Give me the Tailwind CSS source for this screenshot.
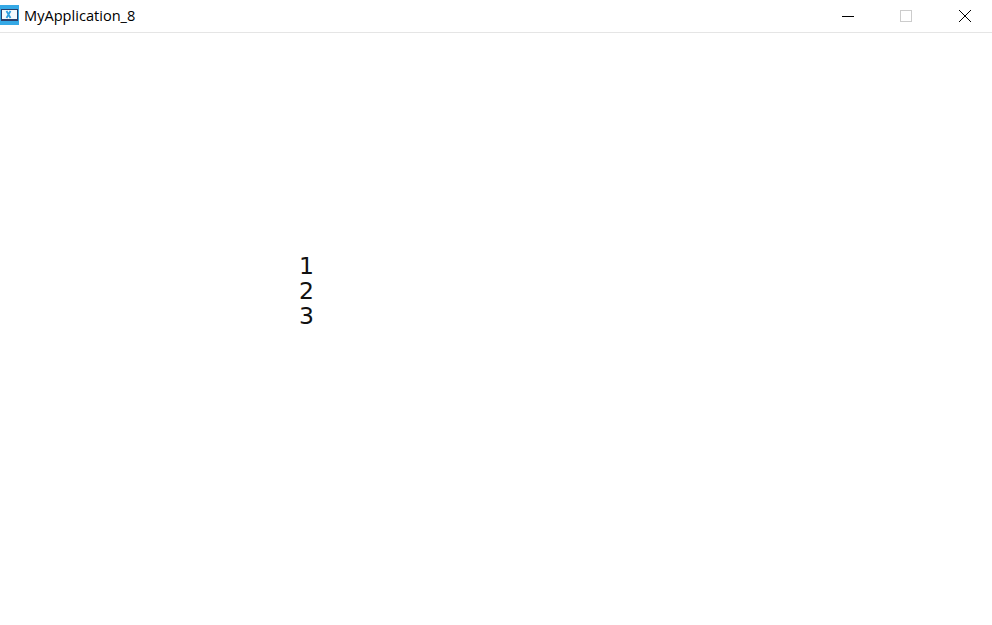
<!DOCTYPE html>
<html lang="en">
<head>
    <meta charset="utf-8"/>
    <title>MyApplication_8</title>
    <script src="https://cdn.jsdelivr.net/npm/@tailwindcss/browser@4"></script>
</head>
<body class="bg-white h-[625px] w-[992px] overflow-hidden">
<div class="flex h-[33px] items-center border-b border-[#e5e5e5] font-['Open_Sans',sans-serif] text-black">
    <svg class="mt-[-2px] h-[20px] w-[19px] shrink-0" viewBox="0 0 19 20">
        <rect width="19" height="20" fill="#35a9e6"/>
        <rect x="1" y="4" width="17" height="12" fill="#2b3f6b"/>
        <rect x="2" y="5" width="15" height="9" fill="#f4f8fc"/>
        <path d="M6.5 6l4 7M10.5 6l-4 7" stroke="#2f9fe0" stroke-width="1.8" fill="none"/>
    </svg>
    <span class="ml-[5px] mt-[-2px] text-[14.6px] leading-[20px]">MyApplication_8</span>
    <div class="ml-auto flex items-center">
        <div class="flex w-[58px] justify-center">
            <svg class="h-3 w-3" viewBox="0 0 12 12"><path d="M0 6.5h12" stroke="#000" fill="none"/></svg>
        </div>
        <div class="flex w-[58px] justify-center">
            <svg class="h-3 w-3" viewBox="0 0 12 12"><rect x=".5" y=".5" width="11" height="11" stroke="#cccccc" fill="none"/></svg>
        </div>
        <div class="flex w-[57px] pl-[24px]">
            <svg class="h-3 w-3" viewBox="0 0 12 12"><path d="M0 0l12 12M12 0L0 12" stroke="#000" fill="none"/></svg>
        </div>
    </div>
</div>
<div class="ml-[299px] mt-[221px] font-['DejaVu_Sans',sans-serif] text-[23.5px] leading-[25px] text-[#111]">
    <div>1</div>
    <div>2</div>
    <div>3</div>
</div>
</body>
</html>
